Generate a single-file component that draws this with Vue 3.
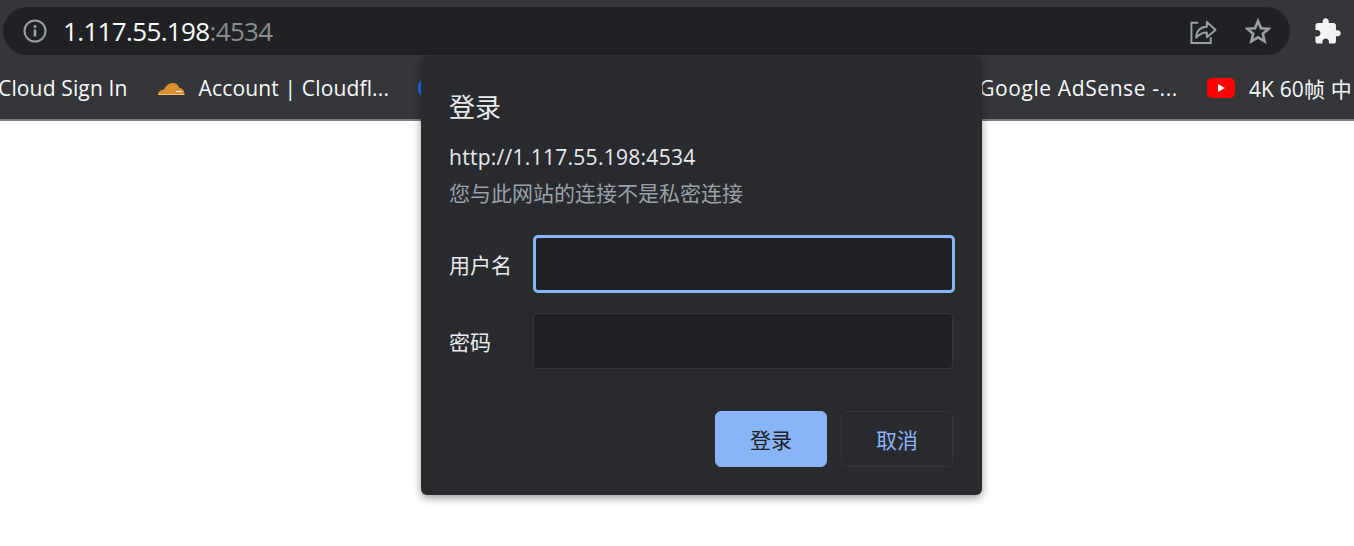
<script setup>
const bookmarksBefore = 'Cloud Sign In'
const origin = 'http://1.117.55.198:4534'
</script>

<template>
  <div class="page">
    <header class="chrome">
      <div class="toolbar">
        <div class="omnibox">
          <svg class="info" viewBox="0 0 24 24" fill="none" stroke="#9aa0a6" stroke-width="2">
            <circle cx="12" cy="12" r="10.5" />
            <path d="M12 10.5v7" stroke-width="2.6" />
            <path d="M12 6.2v2.6" stroke-width="2.6" />
          </svg>
          <span class="host">1.117.55.198</span><span class="port">:4534</span>
          <div class="omni-actions">
            <svg class="share" viewBox="0 0 28 28" fill="none" stroke="#9aa0a6" stroke-width="2">
              <path d="M9 5H2v21h20v-6" />
              <path d="M7 20c0-7 5-11 11-11V4l9 8.5-9 7.5v-5c-5 0-8 1.5-11 5.5z" stroke-linejoin="round" />
            </svg>
            <svg class="star" viewBox="0 0 26 26" fill="none" stroke="#9aa0a6" stroke-width="2.6" stroke-linejoin="miter">
              <path d="M13 3l3 7.2 7.6.6-5.800 5 1.800 7.500L13 19.300l-6.600 4 1.800-7.500-5.800-5 7.600-.6z" />
            </svg>
          </div>
        </div>
        <svg class="puzzle" viewBox="0 0 24 24" fill="#f1f3f4">
          <path d="M20.500 11H19V7c0-1.100-.9-2-2-2h-4V3.500C13 2.120 11.880 1 10.500 1S8 2.120 8 3.500V5H4c-1.100 0-1.990.9-1.990 2v3.800H3.500c1.490 0 2.700 1.210 2.700 2.700s-1.210 2.700-2.700 2.700H2V20c0 1.100.9 2 2 2h3.800v-1.500c0-1.490 1.210-2.700 2.700-2.700 1.490 0 2.700 1.210 2.700 2.700V22H17c1.100 0 2-.9 2-2v-4h1.500c1.380 0 2.500-1.120 2.500-2.500S21.880 11 20.500 11z" />
        </svg>
      </div>
      <nav class="bookmarks">
        <span class="mark">{{ bookmarksBefore }}</span>
        <span class="mark">
          <svg class="favicon" viewBox="0 0 28 20">
            <path d="M1 16c.5-3 3-4 6-4.500C9 7 13 5 16 5c3.500 0 5.500 2 6.500 5 3 0 5 2.500 5 6z" fill="#d98f2f" />
            <path d="M1 16h26.500v1H1z" fill="#f3c27e" />
            <path d="M19 13h6v1h-6z" fill="#fff" />
          </svg>
          Account | Cloudfl...
        </span>
        <span class="mark hidden-mark">
          <svg class="favicon round" viewBox="0 0 16 16">
            <circle cx="8" cy="8" r="7" fill="none" stroke="#1a73e8" stroke-width="2.500" />
          </svg>
        </span>
        <span class="mark wide">Google AdSense -...</span>
        <span class="mark">
          <svg class="favicon" viewBox="0 0 28 20">
            <rect width="28" height="20" rx="5" fill="#f00" />
            <path d="M11 6l7 4-7 4z" fill="#fff" />
          </svg>
          4K 60帧 中
        </span>
      </nav>
    </header>

    <section class="dialog">
      <h1 class="title">登录</h1>
      <p class="origin">{{ origin }}</p>
      <p class="note">您与此网站的连接不是私密连接</p>
      <div class="fields">
        <label class="field">
          <span class="label">用户名</span>
          <span class="input focused"></span>
        </label>
        <label class="field second">
          <span class="label">密码</span>
          <span class="input"></span>
        </label>
      </div>
      <div class="actions">
        <button class="btn primary">登录</button>
        <button class="btn">取消</button>
      </div>
    </section>
  </div>
</template>

<style>
html, body {
  margin: 0;
  background: #fff;
}
</style>

<style scoped>
.page {
  position: relative;
  width: 1354px;
  height: 546px;
  overflow: hidden;
  background: #fff;
  font-family: "Open Sans", "Noto Sans CJK SC", sans-serif;
}
.chrome {
  height: 121px;
  box-sizing: border-box;
  background: #35363a;
  border-bottom: 2px solid #7b7c7f;
}
.toolbar {
  display: flex;
  align-items: center;
  height: 62px;
  padding: 0 0 0 3px;
  box-sizing: border-box;
}
.omnibox {
  display: flex;
  align-items: center;
  width: 1287px;
  height: 48px;
  padding: 0 20px;
  box-sizing: border-box;
  border-radius: 24px;
  background: #202124;
  font-size: 26px;
}
.info {
  width: 24px;
  height: 24px;
  margin-right: 16px;
}
.host {
  color: #fff;
  letter-spacing: -0.65px;
}
.port {
  color: #8a8c8f;
  letter-spacing: -0.65px;
}
.omni-actions {
  display: flex;
  align-items: center;
  gap: 28px;
  margin-left: auto;
  margin-right: -1px;
}
.share {
  width: 28px;
  height: 27px;
}
.star {
  width: 26px;
  height: 26px;
}
.puzzle {
  width: 29px;
  height: 29px;
  margin-left: 23px;
}
.bookmarks {
  display: flex;
  align-items: center;
  gap: 29px;
  height: 52px;
  margin-left: -2px;
  overflow: hidden;
  white-space: nowrap;
  color: #f8f9fa;
  font-size: 21px;
  letter-spacing: 0.15px;
}
.mark {
  display: flex;
  align-items: center;
  gap: 14px;
  flex: none;
}
.wide {
  letter-spacing: 0.6px;
}
.favicon {
  width: 28px;
  height: 20px;
}
.hidden-mark {
  width: 532px;
}
.round {
  width: 20px;
}
.dialog {
  position: absolute;
  top: 56px;
  left: 421px;
  width: 561px;
  height: 439px;
  padding: 32px 29px 28px 28px;
  box-sizing: border-box;
  display: flex;
  flex-direction: column;
  border-radius: 6px;
  background: #292a2d;
  box-shadow: 0 3px 8px rgba(0, 0, 0, 0.4);
}
.title {
  margin: 0;
  font-size: 26px;
  font-weight: 400;
  line-height: 38px;
  color: #e8eaed;
}
.origin {
  margin: 16px 0 0;
  font-size: 21px;
  line-height: 30px;
  letter-spacing: 0.28px;
  color: #e8eaed;
}
.note {
  margin: 6px 0 0;
  font-size: 21px;
  line-height: 30px;
  color: #9aa0a6;
}
.fields {
  margin-top: 27px;
}
.field {
  display: flex;
  align-items: center;
  justify-content: space-between;
}
.second {
  margin-top: 20px;
}
.label {
  font-size: 21px;
  color: #e8eaed;
}
.input {
  width: 420px;
  height: 56px;
  box-sizing: border-box;
  border: 1px solid #36383b;
  border-radius: 4px;
  background: #202124;
}
.focused {
  width: 422px;
  height: 58px;
  margin-right: -2px;
  border: 3px solid #8ab4f8;
  border-radius: 5px;
}
.actions {
  display: flex;
  justify-content: flex-end;
  gap: 14px;
  margin-top: auto;
}
.btn {
  width: 112px;
  height: 56px;
  box-sizing: border-box;
  border: 1px solid #36383b;
  border-radius: 6px;
  background: transparent;
  color: #8ab4f8;
  font-family: inherit;
  font-size: 21px;
}
.primary {
  border-color: #8ab4f8;
  background: #8ab4f8;
  color: #202124;
}
</style>
